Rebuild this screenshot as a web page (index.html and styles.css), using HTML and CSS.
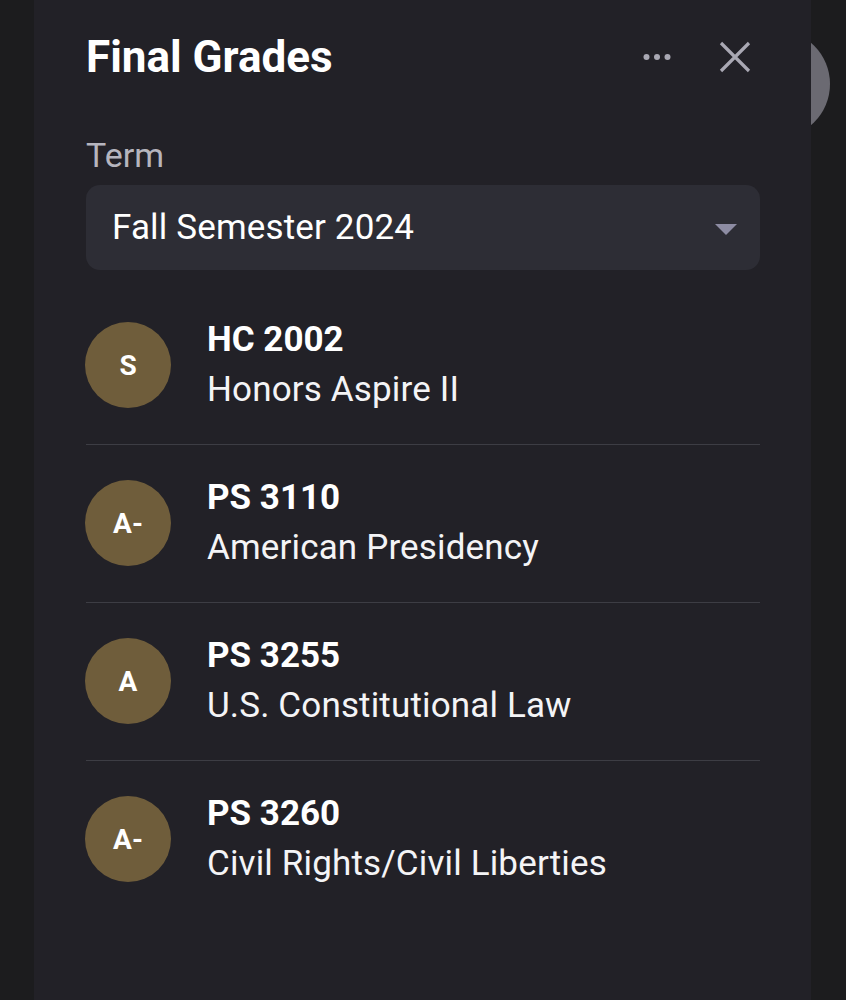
FILE: index.html
```html
<!DOCTYPE html>
<html lang="en">
<head>
<meta charset="utf-8">
<title>Final Grades</title>
<link rel="stylesheet" href="styles.css">
</head>
<body>
<div class="screen">
  <div class="backdrop-avatar"></div>
  <section class="sheet">
    <header class="sheet-header">
      <h1 class="sheet-title">Final Grades</h1>
      <div class="sheet-actions">
        <button class="icon-btn more" aria-label="More">
          <svg width="28" height="8" viewBox="0 0 28 8"><circle cx="3.5" cy="4" r="3" fill="#a9a8b3"/><circle cx="14" cy="4" r="3" fill="#a9a8b3"/><circle cx="24.5" cy="4" r="3" fill="#a9a8b3"/></svg>
        </button>
        <button class="icon-btn close" aria-label="Close">
          <svg width="32" height="32" viewBox="0 0 32 32"><path d="M2 2 L30 30 M30 2 L2 30" stroke="#a9a8b3" stroke-width="3.2" stroke-linecap="butt"/></svg>
        </button>
      </div>
    </header>

    <label class="field-label">Term</label>
    <div class="select">
      <span class="select-value">Fall Semester 2024</span>
      <svg class="select-caret" width="22" height="11" viewBox="0 0 22 11"><path d="M0 0 H22 L11 11 Z" fill="#8d8ca3"/></svg>
    </div>

    <ul class="grade-list">
      <li class="grade-row">
        <div class="grade-badge">S</div>
        <div class="grade-info">
          <div class="course-code">HC 2002</div>
          <div class="course-name">Honors Aspire II</div>
        </div>
      </li>
      <li class="grade-row">
        <div class="grade-badge">A-</div>
        <div class="grade-info">
          <div class="course-code">PS 3110</div>
          <div class="course-name">American Presidency</div>
        </div>
      </li>
      <li class="grade-row">
        <div class="grade-badge">A</div>
        <div class="grade-info">
          <div class="course-code">PS 3255</div>
          <div class="course-name">U.S. Constitutional Law</div>
        </div>
      </li>
      <li class="grade-row last">
        <div class="grade-badge">A-</div>
        <div class="grade-info">
          <div class="course-code">PS 3260</div>
          <div class="course-name">Civil Rights/Civil Liberties</div>
        </div>
      </li>
    </ul>
  </section>
</div>
</body>
</html>
```

FILE: styles.css
```css
* { box-sizing: border-box; }

html, body {
  margin: 0;
  padding: 0;
  background: #1c1c1e;
  font-family: Roboto, "Noto Sans", "Liberation Sans", sans-serif;
  color: #ffffff;
}

.screen {
  position: relative;
  width: 846px;
  height: 1000px;
  overflow: hidden;
  padding-left: 34px;
}

.backdrop-avatar {
  position: absolute;
  left: 722px;
  top: 30px;
  width: 108px;
  height: 108px;
  border-radius: 50%;
  background: #6b6a72;
  z-index: 0;
}

.sheet {
  position: relative;
  z-index: 1;
  width: 777px;
  height: 1000px;
  background: #222127;
  padding: 31px 51px 0 52px;
  display: flex;
  flex-direction: column;
}

.sheet-header {
  display: flex;
  align-items: center;
  justify-content: space-between;
  height: 52px;
}

.sheet-title {
  margin: 0;
  font-size: 44px;
  line-height: 52px;
  font-weight: 700;
}

.sheet-actions {
  display: flex;
  align-items: center;
  gap: 48px;
  padding-right: 9px;
}

.icon-btn {
  background: none;
  border: 0;
  padding: 0;
  display: flex;
  align-items: center;
  justify-content: center;
}

.field-label {
  display: block;
  margin-top: 52px;
  font-size: 34px;
  line-height: 40px;
  color: #b6b5be;
}

.select {
  margin-top: 10px;
  height: 85px;
  border-radius: 14px;
  background: #2d2d35;
  display: flex;
  align-items: center;
  justify-content: space-between;
  padding: 0 23px 0 26px;
}

.select-value {
  font-size: 35px;
  line-height: 40px;
  letter-spacing: 0.15px;
  color: #ffffff;
}

.select-caret { margin-top: 3px; }

.grade-list {
  list-style: none;
  margin: 17px 0 0;
  padding: 0;
}

.grade-row {
  display: flex;
  align-items: center;
  gap: 36px;
  padding: 28px 0 29px;
  border-bottom: 1px solid #3d3d44;
}

.grade-row.last { border-bottom: 0; }

.grade-badge {
  flex: none;
  width: 86px;
  height: 86px;
  margin-left: -1px;
  border-radius: 50%;
  background: #6f5d3b;
  display: flex;
  align-items: center;
  justify-content: center;
  font-size: 28px;
  font-weight: 700;
  color: #ffffff;
}

.grade-info {
  display: flex;
  flex-direction: column;
}

.course-code {
  font-size: 35px;
  line-height: 50px;
  font-weight: 700;
}

.course-name {
  font-size: 35px;
  line-height: 50px;
  font-weight: 400;
  letter-spacing: 0.15px;
  color: #f4f4f6;
}
```
